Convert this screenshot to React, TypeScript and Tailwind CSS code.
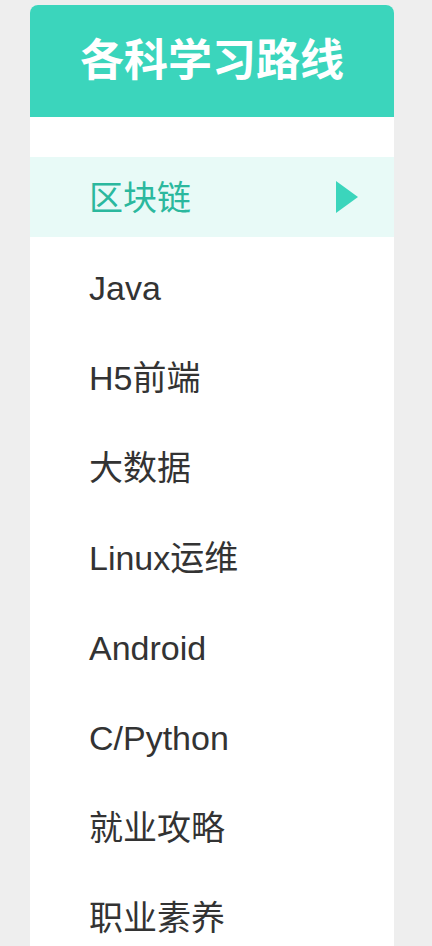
const items = ['区块链', 'Java', 'H5前端', '大数据', 'Linux运维', 'Android', 'C/Python', '就业攻略', '职业素养'];

export default function App() {
  const active = 0;
  return (
    <div
      className="min-h-[946px] bg-[#eeeeee] pt-[5px] pl-[30px]"
      style={{ fontFamily: '"Liberation Sans", "Noto Sans CJK SC", sans-serif' }}
    >
      <div className="w-[364px] min-h-[941px] bg-white rounded-t-[8px] overflow-hidden">
        <div className="h-[112px] bg-[#3bd5bc] flex items-center justify-center">
          <h1 className="text-white text-[44px] font-bold leading-none">各科学习路线</h1>
        </div>
        <ul className="pt-[40px] flex flex-col gap-[10px]">
          {items.map((item, i) => (
            <li
              key={item}
              className={
                i === active
                  ? 'h-[80px] flex items-center justify-between pl-[59px] pr-[36px] bg-[#e8faf7] text-[#2bb89e] text-[34px]'
                  : 'h-[80px] flex items-center pl-[59px] text-[#333333] text-[34px]'
              }
            >
              <span className="pt-[2px]">{item}</span>
              {i === active && (
                <svg width="22" height="32" viewBox="0 0 22 32">
                  <path d="M0 0 L22 16 L0 32 Z" fill="#3bd5bc" />
                </svg>
              )}
            </li>
          ))}
        </ul>
      </div>
    </div>
  );
}
